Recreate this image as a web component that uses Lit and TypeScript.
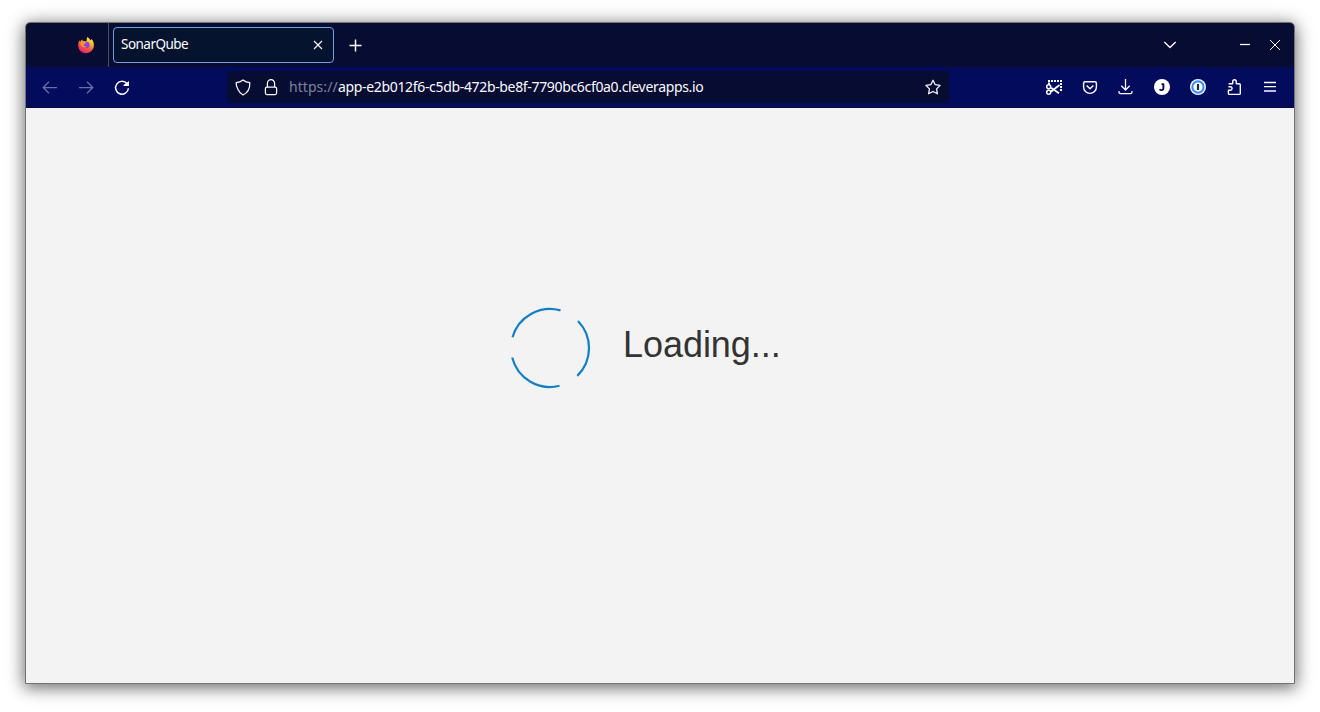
import { LitElement, html, css, svg } from "lit";
import { customElement, property } from "lit/decorators.js";

const starPath =
  "M0-6.8L2.2-2.3 7.1-1.6 3.6 1.9 4.4 6.8 0 4.5-4.4 6.8-3.6 1.9-7.1-1.6-2.2-2.3Z";

const glyphs: Record<string, unknown> = {
  back: svg`<path d="M7 .5H-6.8M-1-5.3L-6.8.5-1 6.3" />`,
  forward: svg`<path d="M-7 .5H6.8M1-5.3L6.8.5 1 6.3" />`,
  reload: svg`<path stroke-width="1.5" d="M5.2-3A6.4 6.4 0 1 0 6.4 1.2" /><path fill="currentColor" stroke="none" d="M7-6V-1H1.5V-2Z" />`,
  shield: svg`<path d="M0-7C2-5.4 4.2-4.6 6.8-4.3C7 1.5 4.2 6 0 8C-4.2 6-7-.5-6.8-4.3C-4.2-4.6-2-5.4 0-7Z" />`,
  lock: svg`<rect x="-5.6" y="0" width="11.2" height="7.6" rx="1.5" /><path d="M-3.6 0V-3.5A3.6 3.9 0 0 1 3.6-3.5V0" />`,
  star: svg`<path d=${starPath} />`,
  snip: svg`
    <path stroke-width="2" stroke-dasharray="2 1" d="M-6-6H8M-5-4.5V-2M7-4V5" />
    <path stroke-width="1.8" d="M-2.5 4.2L5.5-2M-2.5 1L5 6.2" />
    <circle cx="-5.3" cy="-.3" r="2" stroke-width="1.5" /><circle cx="-5.3" cy="5.3" r="2" stroke-width="1.5" />
    <path stroke-width="1.5" d="M-3.5.6L-1.5 2M-3.5 4.8L-1.5 3.4" />`,
  pocket: svg`<path stroke-width="1.4" d="M-4.8-5.3H4.8Q6.4-5.3 6.4-3.7V0A6.4 6.4 0 0 1-6.4 0V-3.7Q-6.4-5.3-4.8-5.3Z" /><path stroke-width="1.5" d="M-3.4-1.5L0 1.7 3.4-1.5" />`,
  download: svg`<path d="M-.5-8V3M-4.7-1.3L-.5 3 3.7-1.3M-7 4V5.2Q-7 6.5-5.5 6.5H4.5Q6 6.5 6 5.2V4" />`,
  account: svg`<circle r="8" fill="#fff" stroke="none" /><path stroke="#070c50" stroke-width="1.9" d="M-.5-2.9H1.4V1.2C1.4 3.5-1.4 3.6-2.4 2.2" />`,
  vault: svg`<circle r="8" fill="#f4f8fe" stroke="none" /><circle r="5.6" fill="#fff" stroke="#3f8ff2" stroke-width="2.1" /><rect x="-1.1" y="-3.1" width="2.2" height="6.2" rx=".4" fill="#1b2733" stroke="none" />`,
  puzzle: svg`<path stroke-width="1.4" d="M-5.4-3.3H-1.3V-5.2Q-1.3-7.3.5-7.3Q2.3-7.3 2.3-5.2V-3.3H5.2Q6.3-3.3 6.3-2.2V6.4Q6.3 7.4 5.2 7.4H-4.4Q-5.6 7.4-5.6 6.4V3.2H-3.7Q-1.9 3.2-1.9 1.5Q-1.9-.2-3.7-.2H-5.6" />`,
  menu: svg`<path stroke-width="1.3" d="M-6-4.5H6M-6-.3H6M-6 4H6" />`,
  close: svg`<path d="M-4-4L4 4M4-4L-4 4" stroke-width="1.1" />`,
  plus: svg`<path d="M-6.5 .5H5.5M-.5-5.5V6.5" stroke-width="1.5" />`,
  chevron: svg`<path d="M-5.7-3L0 2.6 5.7-3" stroke-width="1.4" />`,
  minimize: svg`<path d="M-5-.5H5" />`,
  exit: svg`<path d="M-5-5L5 5M5-5L-5 5" stroke-width="1" />`,
  firefox: svg`
    <defs>
      <linearGradient id="flame" x1=".8" y1="0" x2=".3" y2="1">
        <stop offset="0" stop-color="#fff44f" /><stop offset=".35" stop-color="#ffb12a" />
        <stop offset=".65" stop-color="#ff563c" /><stop offset="1" stop-color="#e8158b" />
      </linearGradient>
    </defs>
    <path fill="url(#flame)" stroke="none" d="M1.4-8C2.7-6.8 3.7-6.2 4.4-4.7C5.2-5.1 5.3-5.7 5.2-6.2C7.1-4.5 8-2.2 7.9.4A7.8 7.6 0 0 1-7.8.8C-8-1.6-7.3-3.3-6.2-4.6L-5.8-3C-5.2-4.2-4.8-4.9-3.8-5.5L-3.2-3.8C-2-4-.8-4 .2-3.2C1-5 .4-6.7 1.4-8Z" />
    <circle cx=".3" cy="0" r="3.3" fill="#8544df" stroke="none" />
    <path fill="#ff9428" stroke="none" d="M-5.2-3.6C-3-4.4-.9-3.6.4-2.1C-1-1.7-1.4-1-2.4-.8C-2 .9-.8 1.7 1 1.5C-.4 3.5-4.7 2.5-5.4-.7Z" />`,
};

@customElement("ui-icon")
class UiIcon extends LitElement {
  @property() name = "";
  static styles = css`
    :host { display: flex; }
    .icon {
      width: 20px;
      height: 20px;
      fill: none;
      stroke: currentColor;
      stroke-width: 1.25;
      stroke-linecap: butt;
      stroke-linejoin: round;
    }
  `;
  render() {
    return html`<svg class="icon" viewBox="-10 -10 20 20" aria-hidden="true">${glyphs[this.name]}</svg>`;
  }
}

@customElement("app-root")
class AppRoot extends LitElement {
  static styles = css`
    :host {
      display: block;
      box-sizing: border-box;
      height: 712px;
      padding: 22px 25px 28px;
      background: #fff;
      overflow: hidden;
      font-family: "Noto Sans", "Open Sans", sans-serif;
      color: #fbfbfe;
    }
    .window {
      box-sizing: border-box;
      display: flex;
      flex-direction: column;
      height: 662px;
      border: 1px solid #737373;
      border-radius: 5px 5px 0 0;
      background: #f3f3f3;
      box-shadow: 0 3px 15px 1px rgba(0, 0, 0, 0.48), 0 2px 24px rgba(0, 0, 0, 0.16);
    }
    .tabs {
      display: flex;
      flex: none;
      height: 44px;
      background: #070c33;
      border-radius: 4px 4px 0 0;
    }
    .home {
      display: flex;
      box-sizing: border-box;
      width: 83px;
      padding: 12px 0 0 50px;
      border-right: 1px solid #484c67;
    }
    .tab {
      box-sizing: border-box;
      display: flex;
      align-items: center;
      justify-content: space-between;
      width: 221px;
      height: 36px;
      margin: 4px 0 0 4px;
      padding: 0 5px 0 7px;
      border: 1px solid #789bdc;
      border-radius: 4px;
      background: #05132e;
    }
    .title { font-size: 13.5px; line-height: 20px; letter-spacing: -0.53px; margin-top: -2px; }
    .add { margin: 12px 0 0 12px; }
    .controls { display: flex; margin: 12px 9px 0 auto; }
    .chevron { margin-right: 55px; }
    .minimize { margin-right: 10px; }
    .toolbar {
      box-sizing: border-box;
      display: flex;
      flex: none;
      height: 41px;
      padding: 4px 6px 0;
      background: #030b5c;
      border-bottom: 1px solid #04083d;
    }
    .button {
      display: grid;
      place-items: center;
      width: 36px;
      height: 32px;
    }
    .disabled { color: #6c70a4; }
    .address {
      box-sizing: border-box;
      display: flex;
      align-items: center;
      width: 722px;
      height: 32px;
      margin-left: 87px;
      padding: 0 6px;
      gap: 8px;
      border-radius: 4px;
      background: #070c33;
    }
    .url { flex: 1; display: flex; font-size: 14px; line-height: 20px; white-space: nowrap; }
    .scheme { width: 49px; color: #7f829a; letter-spacing: 0.05px; }
    .host { letter-spacing: -0.335px; }
    .actions { display: flex; margin-left: auto; }
    .page {
      flex: 1;
      display: flex;
      align-items: flex-start;
      padding: 196px 0 0 480px;
      gap: 29px;
      color: #333;
    }
    .spinner { width: 88px; height: 88px; fill: none; stroke: #1480c4; stroke-width: 2.2; }
    .loading { font: 36px/40px "Liberation Sans", Arial, sans-serif; letter-spacing: -0.05px; margin-top: 21px; }
  `;
  render() {
    return html`
      <main class="window">
        <header class="tabs">
          <div class="home"><ui-icon name="firefox"></ui-icon></div>
          <div class="tab"><span class="title">SonarQube</span><ui-icon name="close"></ui-icon></div>
          <ui-icon class="add" name="plus"></ui-icon>
          <div class="controls">
            <ui-icon class="chevron" name="chevron"></ui-icon>
            <ui-icon class="minimize" name="minimize"></ui-icon>
            <ui-icon name="exit"></ui-icon>
          </div>
        </header>
        <nav class="toolbar">
          <div class="button disabled"><ui-icon name="back"></ui-icon></div>
          <div class="button disabled"><ui-icon name="forward"></ui-icon></div>
          <div class="button"><ui-icon name="reload"></ui-icon></div>
          <div class="address">
            <ui-icon name="shield"></ui-icon>
            <ui-icon name="lock"></ui-icon>
            <div class="url"><span class="scheme">https://</span><span class="host">app-e2b012f6-c5db-472b-be8f-7790bc6cf0a0.cleverapps.io</span></div>
            <ui-icon name="star"></ui-icon>
          </div>
          <div class="actions">
            ${["snip", "pocket", "download", "account", "vault", "puzzle", "menu"].map(
              (name) => html`<div class="button"><ui-icon name=${name}></ui-icon></div>`
            )}
          </div>
        </nav>
        <section class="page">
          <svg class="spinner" viewBox="-44 -44 88 88">
            <path d="M-37.5-10.7A39 39 0 0 1 10.5-37.6" />
            <path d="M28-27.1A39 39 0 0 1 27.3 27.9" />
            <path d="M-37.8 9.5A39 39 0 0 0 9.5 37.8" />
          </svg>
          <div class="loading">Loading...</div>
        </section>
      </main>
    `;
  }
}
